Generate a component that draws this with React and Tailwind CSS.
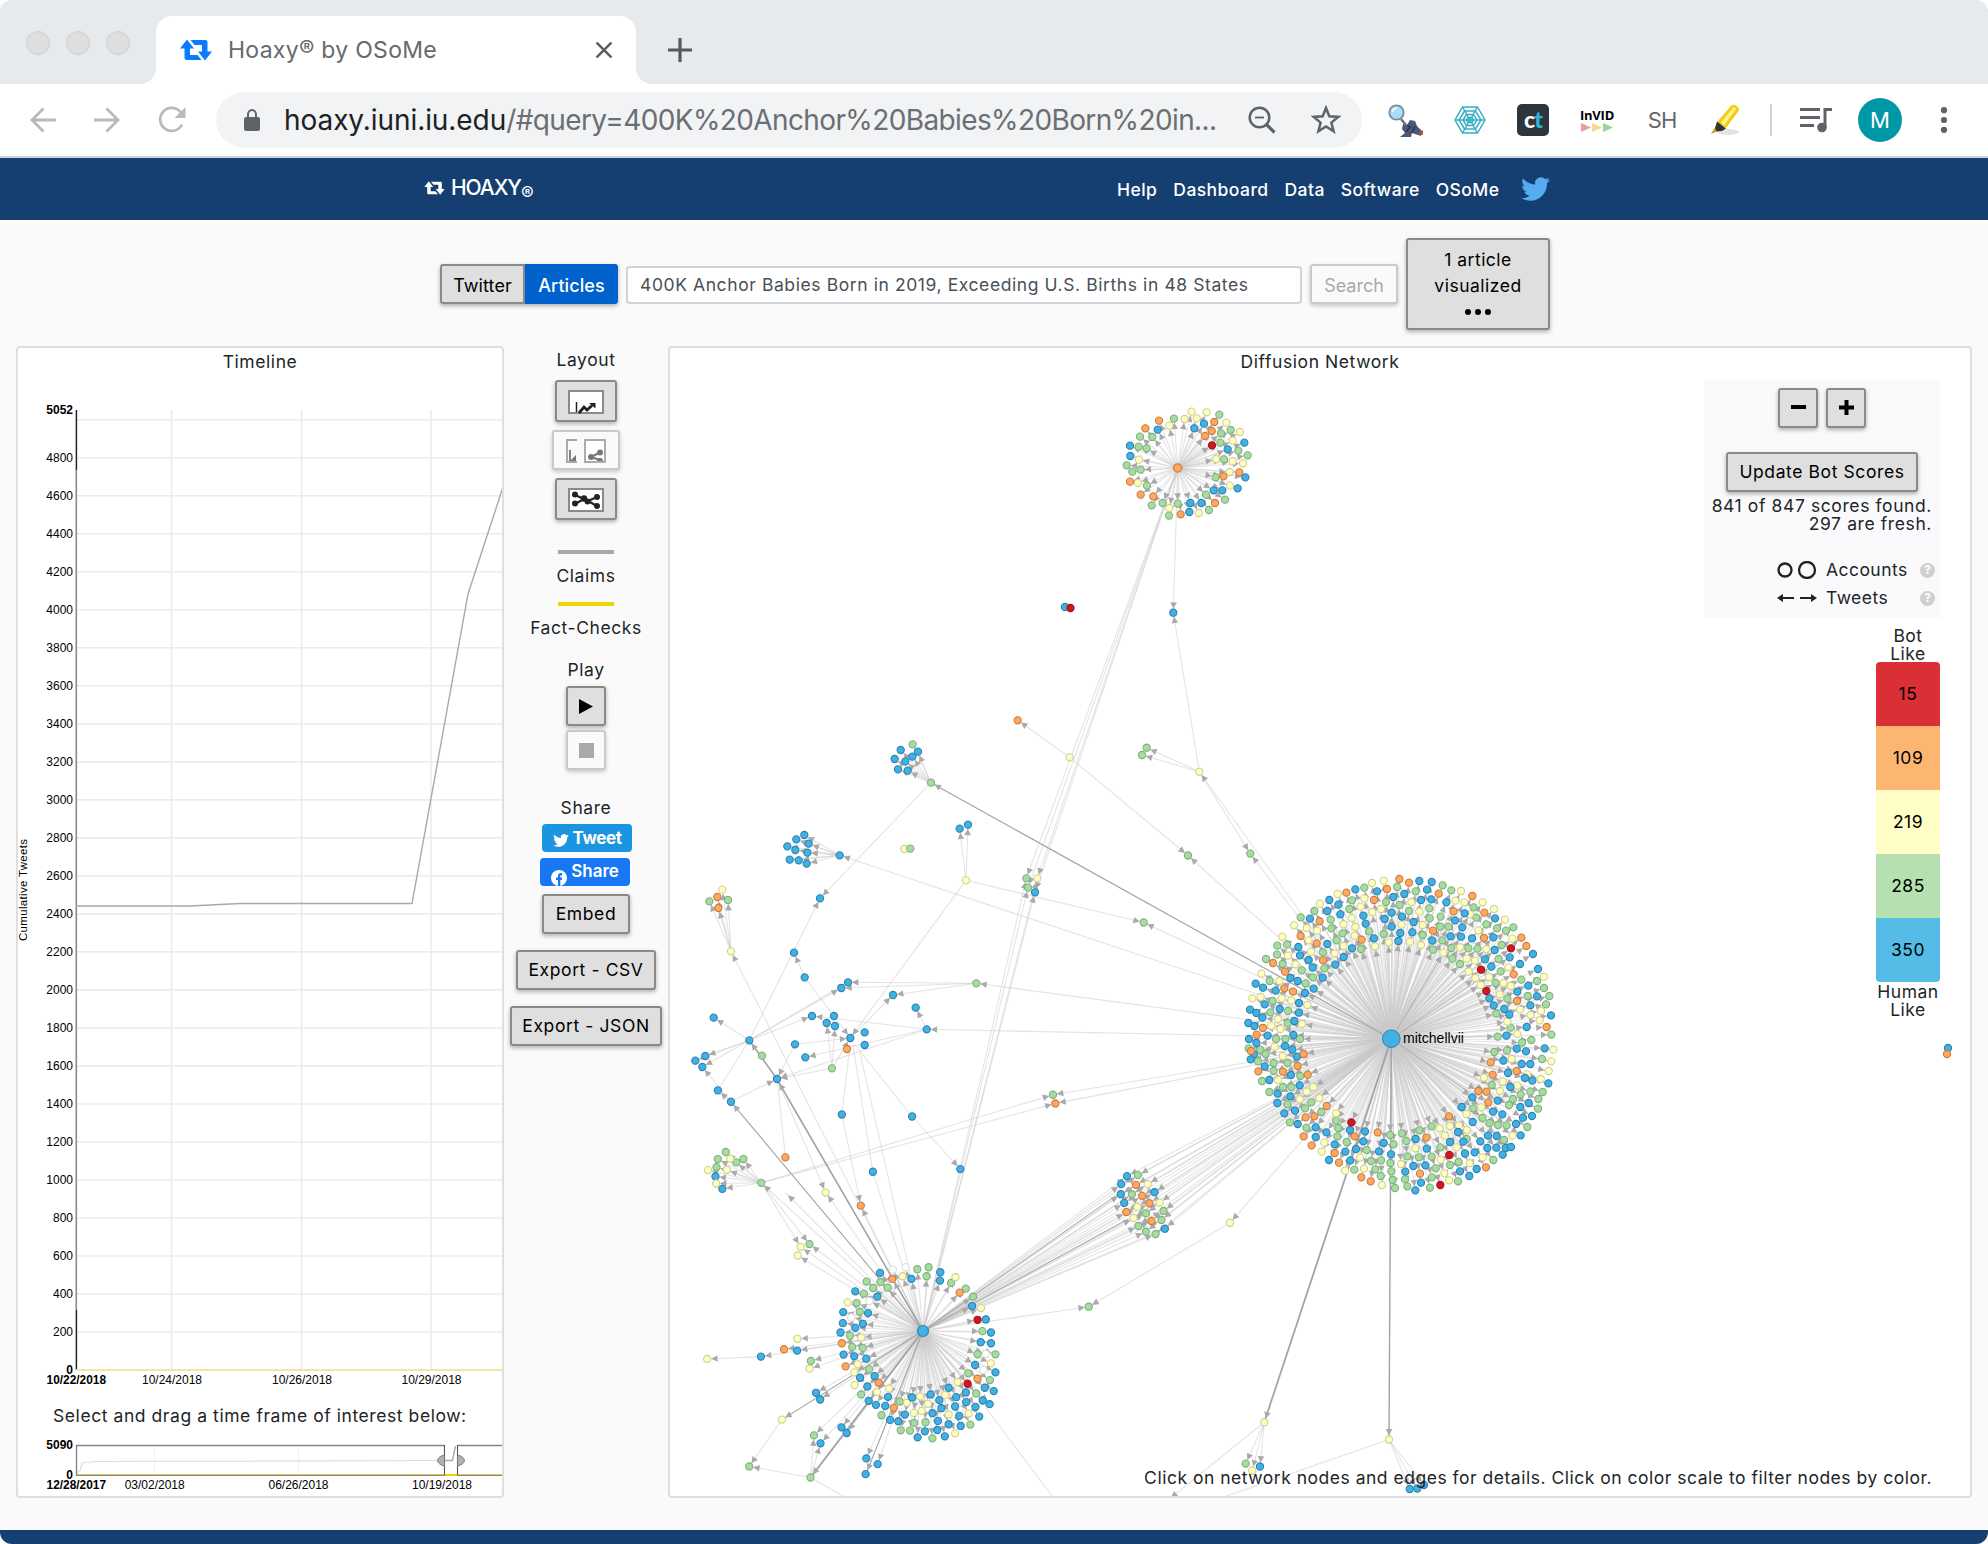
import React from "react";

/* ---------- network data: "x,y" lists per colour, local units per cluster ---------- */
const FILL = { b: "#41b1e1", g: "#a8daa2", y: "#fefec0", o: "#fda860", r: "#cd1a22", w: "#ffffff" };
const EDGE = { b: "#2d82b3", g: "#7bb37c", y: "#cfcf95", o: "#cb7b3f", r: "#a8141a", w: "#dddddd" };

const MAIN = {
  g: "403,83 501,81 557,94 468,126 509,135 537,153 638,76 664,91 366,121 358,147 253,153 212,172 302,179 304,205 338,220 320,241 418,214 461,222 393,267 578,225 598,145 599,175 632,170 631,200 655,200 637,241 609,269 667,296 690,312 664,264 715,265 742,266 739,173 731,142 769,193 801,205 828,212 850,202 815,255 806,297 812,334 797,369 874,359 921,363 942,384 958,408 948,433 893,408 832,416 799,461 842,503 876,548 803,530 793,576 904,540 964,524 936,597 831,572 142,257 171,254 141,284 108,297 158,312 215,331 119,363 227,370 249,352 283,325 279,277 128,423 121,457 174,453 173,490 138,537 166,537 210,537 56,565 91,569 107,582 84,604 131,609 173,609 131,633 211,648 96,663 159,681 184,681 118,696 172,733 225,745 244,727 274,756 180,787 229,803 318,782 325,804 322,829 350,846 410,870 423,903 453,901 436,928 452,948 373,929 480,825 516,820 491,853 529,843 532,889 567,892 605,890 568,811 605,799 631,862 481,909 484,934 525,958 488,960 495,984 532,979 617,925 606,952 600,983 660,915 686,906 684,964 785,675 849,717 872,703 901,695 938,696 925,717 924,746 837,735 730,745 757,774 779,789 804,795 830,796 892,801 822,840 710,837 790,900",
  y: "426,69 461,62 323,102 270,131 403,115 392,140 427,156 453,147 544,126 568,155 693,93 676,122 703,127 758,127 792,147 825,179 720,163 745,211 365,174 340,193 376,201 374,227 341,258 314,280 192,196 230,204 261,212 236,241 157,230 243,275 174,287 196,313 94,341 148,363 67,415 92,411 155,415 184,422 232,435 216,492 144,477 124,497 151,507 134,560 158,588 144,660 230,695 250,681 209,718 268,714 318,760 283,848 275,875 390,893 402,926 345,932 456,975 513,912 515,194 476,247 540,245 573,255 435,259 578,195 640,278 690,262 769,267 710,296 735,302 716,335 736,354 777,351 752,375 821,369 843,378 847,236 835,322 942,350 809,403 870,449 902,465 933,453 929,481 832,485 862,522 970,569 845,597 964,604 956,633 932,657 891,643 818,665 762,653 810,693 862,677 754,742 709,762 711,810 687,796 660,798 629,805 645,827 556,865 680,862 632,899 643,940 657,961 719,910 758,892 847,827",
  b: "376,88 441,94 568,63 605,66 591,89 523,102 490,111 573,120 604,118 649,127 298,120 325,134 292,153 331,163 400,167 407,191 464,177 485,158 516,170 485,200 551,186 547,217 511,219 505,243 432,235 607,242 704,160 675,181 697,202 795,175 662,229 693,230 726,235 790,232 794,270 839,292 765,298 784,320 909,282 870,312 924,327 895,377 862,395 921,409 901,436 963,466 890,501 838,464 823,447 829,527 791,436 778,415 860,566 888,574 944,565 240,176 292,252 205,261 210,286 236,300 248,323 316,314 341,291 366,265 278,353 251,386 225,399 181,354 203,363 77,371 99,383 137,392 104,433 60,449 79,459 97,473 149,447 207,429 207,458 193,483 55,489 73,498 57,537 79,549 113,527 190,525 165,558 187,569 201,590 72,583 62,598 104,619 183,645 118,660 209,676 143,701 181,709 142,729 163,760 195,752 203,792 257,802 289,817 257,831 314,853 360,810 405,814 400,844 378,867 346,875 361,901 297,900 461,849 447,874 483,883 557,837 590,866 550,918 586,916 526,935 573,968 556,991 660,846 684,816 728,786 700,845 734,877 705,880 751,844 774,827 800,828 772,864 799,863 827,864 843,861 818,884 872,826 858,792 690,934 718,948 740,927 879,773 906,768 871,741 896,729 817,763 789,755 803,722 727,712 695,741 841,681 885,654 907,662 955,670 875,612 901,612 820,602 834,639",
  o: "508,57 537,68 471,87 349,98 432,120 626,101 727,108 671,154 763,158 609,212 762,234 874,233 889,258 269,184 212,228 395,239 260,250 279,301 129,309 165,335 163,385 189,395 99,504 80,524 63,573 221,582 85,634 159,635 203,618 233,644 290,738 227,772 253,769 221,829 245,856 374,829 443,817 314,879 327,908 394,952 422,964 570,941 589,833 657,769 745,693 769,695 775,727 788,644 782,607 860,633 851,343 861,423 950,501 768,922",
  r: "843,265 753,329 769,393 364,787 658,885 631,975",
};
const TOP = {
  g: "282,116 418,104 180,170 217,171 176,200 200,205 140,256 157,275 182,269 201,317 215,376 248,369 267,407 293,371 378,344 387,390 435,359 407,292 432,238 421,188 423,160 452,150 475,212 503,226",
  y: "335,95 380,97 314,117 350,115 268,137 439,128 480,156 458,182 408,237 458,244 489,250 449,276 450,317 356,399 268,384 174,309 177,239",
  o: "237,122 196,145 403,126 395,153 375,168 478,277 430,289 150,305 182,344 220,349 302,403 405,369",
  b: "150,197 151,228 233,149 343,145 372,131 493,188 443,208 496,292 473,325 427,331 401,331 364,369 331,369 328,396",
  r: "396,196",
};
const RING = {
  g: "571,602 611,603 590,621 632,620 563,638 718,565 751,559 745,586 816,606 859,623 880,647 542,666 551,692 907,750 523,764 529,797 560,800 893,819 945,819 578,864 866,876 929,896 555,939 889,936 667,960 614,1001 709,1024 742,1022 670,1046 697,1047 762,1070 872,1029",
  y: "675,586 829,589 516,664 903,681 555,769 545,849 535,873 536,911 636,921 601,932 932,846 835,902 726,945 799,941 688,964 749,967 708,994 731,988 809,999 867,996 828,1055",
  o: "645,594 841,635 499,786 510,855 606,904 893,892 650,979",
  b: "610,576 701,594 785,574 784,599 538,631 602,647 503,693 575,696 877,675 917,715 502,726 560,728 538,740 495,754 932,754 902,783 932,786 504,820 535,825 570,832 886,851 594,884 552,889 573,915 945,873 633,946 577,958 598,970 625,973 809,919 757,939 703,948 831,947 859,933 914,919 940,929 782,956 828,975 860,962 908,957 928,968 887,976 788,980 762,995 682,999 639,1015 663,1019 840,1003 898,1005 778,1018 809,1028 844,1033 740,1049 776,1045 719,1067 798,1064",
  r: "893,716 864,907",
  w: "647,566 684,559 579,660 526,709 917,818 910,866",
};
/* shared audience between the two large hubs */
const BRIDGE = {
  b: "1327,287 1310,311 1407,335 1309,341 1319,367 1437,444",
  g: "1359,284 1341,341 1382,398 1433,391 1427,418 1360,436 1382,453 1410,460",
  y: "1387,311 1422,366 1357,379 1346,412",
  o: "1353,313 1371,346 1392,368 1325,394 1398,421",
};
const LOWER = {
  b: "139,31 177,65 499,103 703,109 589,274 843,266 132,288 152,325 264,826 369,808 424,934 436,954 498,1037 513,1054 437,1085 570,1130 603,1147 568,1177",
  g: "1112,44 162,215 139,236 213,236 192,246 135,260 265,307 405,490 1216,677 409,839 418,1061 408,1187 230,1154",
  y: "175,235 110,269 165,268 134,309 452,336 379,498 371,524 370,773 108,833 405,862 325,1014",
  o: "1119,70 335,231 554,375 331,804",
};
const UPPER = {
  o: "1043,61 142,591 145,624 531,1047",
  y: "522,172 703,447 888,541 157,569 183,754 1102,535",
  g: "728,133 783,248 721,446 1069,535 1074,563 118,604 174,600 919,850 276,1067 486,1105",
  b: "692,150 744,155 674,177 727,170 706,184 684,208 713,212 403,405 379,418 416,431 352,439 376,450 412,458 359,479 386,481 410,491 509,466 869,386 894,374 1095,577 450,595 372,758 404,832 534,847 514,864 669,885 737,923 770,988 426,948 492,948 470,969 495,978 541,1014 584,997 584,1035 131,953 238,1021 375,1033 406,1072 106,1068 76,1082 97,1101 321,1137",
};
UPPER.y = UPPER.y.replace("522,172", "1199,172");
const LOOSE = {
  g: "1146.7,747.7 1142,755 1188,855.5 1250.3,853.6 1143.7,922.5 1245.7,1463.6",
  y: "1199.3,771.8 1230,1222.8 1264.3,1422.2 1252.3,1470.5 1389,1439.5",
  b: "1173.3,612.7 1065,607 1260,1466.5 1409.7,1489 1417.3,1488.5 1424,1485 1948,1048",
  r: "1070.5,608",
  o: "1947,1054",
};

const build = (data, ox, oy, sx, sy) =>
  Object.entries(data).flatMap(([c, s]) =>
    s.split(" ").map((p) => {
      const [x, y] = p.split(",").map(Number);
      return { c, x: ox + x / sx, y: oy + y / sy };
    })
  );

const main = build(MAIN, 1230, 860, 3, 3);
const top = build(TOP, 1080, 380, 3, 3);
const ring = build(RING, 670, 1080, 2.9037, 2.986);
const bridge = build(BRIDGE, 670, 1080, 2.9037, 2.986);
const lower = build(LOWER, 670, 1080, 2.9037, 2.986);
const upper = build(UPPER, 670, 700, 3, 3);
const loose = build(LOOSE, 0, 0, 1, 1);

const M = [1391.3, 1038.7];
const A = [1177.7, 468];
const B = [923, 1331];

const spokes = (hub, nodes) => nodes.map((n) => [hub[0], hub[1], n.x, n.y, 1]);
const fan = (x, y, pts) => pts.map((p) => [x, y, p[0], p[1], 1]);

const links = [
  ...fan(931, 782.7, [[912.7, 744.3], [918, 751.7], [900.7, 750], [912.3, 756.7], [905.3, 761.3], [894.7, 759], [898, 769.3], [907.7, 770.7]]),
  ...fan(839.7, 855.3, [[804.3, 835], [796.3, 839.3], [808.7, 843.7], [787.3, 846.3], [795.3, 850], [807.3, 852.7], [789.7, 859.7], [798.7, 860.3], [806.7, 863.7]]),
  ...fan(731, 951.3, [[722.3, 889.7], [717.3, 897], [718.3, 908], [709.3, 901.3], [728, 900]]),
  ...fan(966, 880.3, [[959.7, 828.7], [968, 824.7]]),
  ...fan(761.3, 1182.8, [[725.8, 1152], [717.9, 1159], [743.4, 1159], [736.1, 1162.4], [716.5, 1167], [707.9, 1170], [726.8, 1169.8], [715.5, 1176.4], [716.1, 1183.5], [722.3, 1188.8], [809.5, 1244.1], [800.5, 1246.8], [1053, 1094.7], [1055.4, 1103.4]]),
  ...fan(749.3, 1040.3, [[820, 898.3], [713.7, 1017.7], [812, 1016], [841.3, 988], [848, 982.3], [705.3, 1056], [695.3, 1060.7], [702.3, 1067]]),
  ...fan(976.3, 983.3, [[848, 982.3], [841.3, 988], [893, 995]]),
  ...fan(926.7, 1029.3, [[915.7, 1007.7], [812, 1016], [805.3, 1057.3], [777, 1079]]),
  ...fan(832, 1068.3, [[826.7, 1023], [835, 1026], [777, 1079], [850.3, 1038]]),
  [804.7, 977.3, 850.3, 1038, 1], [966, 880.3, 850.3, 1038, 1], [850.3, 1038, 893, 995, 1],
  [795, 1044.3, 850.3, 1038, 1], [795, 1044.3, 777, 1079, 1],
  ...fan(1199.3, 771.8, [[1146.7, 747.7], [1142, 755], [1250.3, 853.6], [1173.3, 612.7]]),
  ...fan(1069.7, 757.3, [[1017.7, 720.3], [1188, 855.5]]),
  ...fan(1264.3, 1422.2, [[1245.7, 1463.6], [1252.3, 1470.5], [1260, 1466.5], [1168, 1500]]),
  ...fan(1389, 1439.5, [[1409.7, 1489], [1417.3, 1488.5], [1424, 1485]]),
  ...fan(M[0], M[1], [[839.7, 855.3], [976.3, 983.3], [926.7, 1029.3], [1188, 855.5], [1250.3, 853.6], [1199.3, 771.8], [1143.7, 922.5], [1053, 1094.7], [1055.4, 1103.4], [1230, 1222.8]]),
  ...fan(A[0], A[1], [[1173.3, 612.7], [1026.3, 878.3], [1028, 887.7], [1037.3, 878.3], [1035, 892.3]]),
  ...fan(B[0], B[1], [[1028, 887.7], [1026.3, 878.3], [1035, 892.3], [1037.3, 878.3], [731, 951.3], [761.3, 1182.8], [785.4, 1192.5], [825.7, 1192.5], [860.8, 1205.6], [809.5, 1244], [800.5, 1247], [797.8, 1255.5], [797.4, 1338.9], [797, 1350.6], [784, 1349.3], [760.9, 1356.6], [810.9, 1361], [809.5, 1368.7], [816, 1392.8], [820, 1399.5], [841.5, 1427.3], [846.7, 1433], [814, 1435.3], [820.5, 1443.4], [866.3, 1458.4], [877.7, 1464.1], [1088.8, 1306.7]]),
  [966, 880.3, 1143.7, 922.5, 1], [931, 782.7, 820, 898.3, 1], [804.7, 977.3, 794, 952.7, 1],
  [912, 1116.5, 960.3, 1169, 1], [912, 1116.5, 855, 1045, 0],
  [850, 1045, 841.8, 1114.5, 0], [841.8, 1114.5, 860.8, 1205.6, 1], [853, 1045, 872.8, 1171.8, 0],
  [872.8, 1171.8, 923, 1331, 0], [777.4, 1080, 785.4, 1157.4, 0], [777.4, 1080, 825.7, 1192.5, 1],
  [731, 1101.8, 777, 1079, 1], [731, 1101.8, 717.9, 1090.4, 1], [731, 1101.8, 702.3, 1067, 1],
  [860, 1053, 923, 1331, 0], [749.3, 1040.3, 715, 1095, 0], [760.9, 1356.6, 707.2, 1359, 1],
  [781.9, 1419.6, 749.2, 1466.5, 1], [810.5, 1477.5, 749.2, 1466.5, 1], [810.5, 1477.5, 814, 1435.3, 1],
  [810.5, 1477.5, 820.5, 1443.4, 1], [810.5, 1477.5, 850, 1500, 0], [980, 1400, 1055, 1500, 0],
  [1230, 1222.8, 1088.8, 1306.7, 1], [1389, 1439.5, 1215, 1500, 0], [923, 1331, 980, 1400, 0],
];
const strong = [
  [1391.3, 1038.7, 931, 782.7, 1.2], [1391.3, 1038.7, 1264.3, 1422.2, 1.8], [1391.3, 1038.7, 1389, 1439.5, 1.4],
  [923, 1331, 777.4, 1080, 1.6], [923, 1331, 731, 1101.8, 1.1], [923, 1331, 781.9, 1419.6, 1.1],
  [923, 1331, 810.5, 1477.5, 2], [777, 1079, 749.3, 1040.3, 1.6], [923, 1331, 866, 1474, 1.1],
  [923, 1331, 1121, 1192, 1], [923, 1331, 1128, 1219, 1],
  [1391.3, 1038.7, 1438, 962, 0.8], [1391.3, 1038.7, 1476, 982, 0.8], [1391.3, 1038.7, 1470, 1093, 0.8],
];

function arrow([x1, y1, x2, y2]) {
  const d = Math.hypot(x2 - x1, y2 - y1) || 1;
  const ux = (x2 - x1) / d;
  const uy = (y2 - y1) / d;
  const tx = x2 - ux * 4;
  const ty = y2 - uy * 4;
  const bx = tx - ux * 6.4;
  const by = ty - uy * 6.4;
  return `M${tx.toFixed(1)} ${ty.toFixed(1)}L${(bx - uy * 3.3).toFixed(1)} ${(by + ux * 3.3).toFixed(1)}L${(bx + uy * 3.3).toFixed(1)} ${(by - ux * 3.3).toFixed(1)}Z`;
}
const seg = (l) => `M${l[0].toFixed(1)} ${l[1].toFixed(1)}L${l[2].toFixed(1)} ${l[3].toFixed(1)}`;

function Network() {
  const rays = [...spokes(M, main), ...spokes(A, top), ...spokes(B, ring)];
  const shared = [...spokes(M, bridge), ...spokes(B, bridge)];
  const thin = [...rays, ...shared, ...links];
  const heads = [...rays, ...shared, ...links.filter((l) => l[4]), ...strong.slice(0, 9)];
  return (
    <svg className="block h-full w-full" viewBox="670 348 1300 1148" fill="none">
      <g stroke="#c9c9c9" strokeOpacity="0.5" strokeWidth="1.1">
        {thin.map((l, i) => <path key={i} d={seg(l)} />)}
      </g>
      <g stroke="#a3a3a3">
        {strong.map((l, i) => <path key={i} d={seg(l)} strokeWidth={l[4]} />)}
      </g>
      <path d={heads.map(arrow).join("")} fill="#aaaaaa" />
      {[...upper, ...lower, ...loose, ...bridge, ...top, ...ring, ...main].map((n, i) => (
        <circle key={i} cx={n.x} cy={n.y} r="3.6" fill={FILL[n.c]} stroke={EDGE[n.c]} strokeWidth="1.1" />
      ))}
      <circle cx={A[0]} cy={A[1]} r="4.1" fill={FILL.o} stroke={EDGE.o} strokeWidth="1.2" />
      <circle cx={B[0]} cy={B[1]} r="5.5" fill={FILL.b} stroke={EDGE.b} strokeWidth="1.2" />
      <circle cx={M[0]} cy={M[1]} r="8.8" fill={FILL.b} stroke={EDGE.b} strokeWidth="1" />
      <text x="1403" y="1043" fontSize="14" fill="#000" fontFamily="Liberation Sans, sans-serif" textLength="61" lengthAdjust="spacingAndGlyphs">mitchellvii</text>
    </svg>
  );
}

/* ---------- timeline ---------- */
const yAt = (v) => 1370 - v * 0.19005;
const ticks = Array.from({ length: 24 }, (_, i) => (i + 1) * 200);

function Timeline() {
  return (
    <svg className="block h-full w-full" viewBox="18 348 484 1148" fontFamily="Liberation Sans, sans-serif" fontSize="12" fill="#000">
      <g stroke="#ececec" strokeWidth="1.6">
        {[...ticks, 5000].map((v) => <path key={v} d={`M77 ${yAt(v)}H504`} />)}
        {[171.5, 301.5, 431].map((x) => <path key={x} d={`M${x} 410V1370`} />)}
      </g>
      <path d="M76.3 410V1370" stroke="#8a8a8a" strokeWidth="1.6" />
      <path d="M76.5 410V470M76.5 1310V1370" stroke="#222" strokeWidth="1.2" />
      <path d="M76 1370H504" stroke="#f2e6a0" strokeWidth="2" />
      <path d="M76 906H190L240 903.5H412L468 594L504 484" fill="none" stroke="#a9a9a9" strokeWidth="1.4" />
      <g textAnchor="end">
        {ticks.map((v) => <text key={v} x="73" y={yAt(v) + 4.5}>{v}</text>)}
        <g fontWeight="700">
          <text x="73" y="414">5052</text>
          <text x="73" y="1373.5">0</text>
          <text x="73" y="1449">5090</text>
          <text x="73" y="1478.5">0</text>
        </g>
      </g>
      <g textAnchor="middle">
        <text x="76.3" y="1384" fontWeight="700" textLength="59.5" lengthAdjust="spacingAndGlyphs">10/22/2018</text>
        <text x="172" y="1384">10/24/2018</text>
        <text x="302" y="1384">10/26/2018</text>
        <text x="431.5" y="1384">10/29/2018</text>
        <text x="76.3" y="1489" fontWeight="700" textLength="59.5" lengthAdjust="spacingAndGlyphs">12/28/2017</text>
        <text x="154.7" y="1489">03/02/2018</text>
        <text x="298.5" y="1489">06/26/2018</text>
        <text x="442" y="1489">10/19/2018</text>
      </g>
      <text x="26.500" y="890" fontSize="11.500" textAnchor="middle" transform="rotate(-90 26.500 890)" textLength="102">Cumulative Tweets</text>
      <path d="M154.5 1446V1475M298.5 1446V1475" stroke="#f3f3f3" />
      <path d="M76 1473L80 1471L82 1463L95 1461.5L444 1460.5" fill="none" stroke="#dedede" strokeWidth="1.2" />
      <path d="M504 1445.5H457.5M444.5 1445.5H76.5V1475" fill="none" stroke="#858585" strokeWidth="1.4" />
      <path d="M76 1475.3H504" stroke="#9b8b3c" strokeWidth="1.6" />
      <path d="M444.5 1475H457.5" stroke="#f0d400" strokeWidth="2.2" />
      <path d="M444 1460.5H452.5L455.5 1446" fill="none" stroke="#a9a9a9" strokeWidth="1.4" />
      <path d="M444.5 1445V1475M457.5 1445V1475" stroke="#555" strokeWidth="1.1" />
      <g fill="#b0b0b0" stroke="#777" strokeWidth="1">
        <path d="M444.5 1455C440 1456 438 1458 437.5 1460.5C438 1463 440 1465 444.5 1466Z" />
        <path d="M457.5 1455C462 1456 464 1458 464.5 1460.5C464 1463 462 1465 457.5 1466Z" />
      </g>
    </svg>
  );
}

/* ---------- icons ---------- */
const Retweet = ({ className }) => (
  <svg className={className} viewBox="0 0 32 22" fill="currentColor">
    <path d="M7 0.500L14 9.500H10V16H17.500L21.500 21H6.500Q4.500 21 4.500 19V9.500H0Z" />
    <path d="M25 21.500L18 12.500H22V6H14.500L10.500 1H25.500Q27.500 1 27.500 3V12.500H32Z" />
  </svg>
);
const Bird = ({ className }) => (
  <svg className={className} viewBox="0 0 24 20" fill="currentColor">
    <path d="M23.950 2.570a10 10 0 01-2.820.770 4.960 4.960 0 002.160-2.720c-.950.550-2 .950-3.130 1.180a4.920 4.920 0 00-8.380 4.480C7.690 6.100 4.070 4.130 1.640 1.160a4.820 4.820 0 00-.660 2.480c0 1.710.870 3.210 2.190 4.100a4.900 4.900 0 01-2.230-.620v.060a4.920 4.920 0 003.950 4.830 5 5 0 01-2.210.080 4.940 4.940 0 004.600 3.420A9.870 9.870 0 010 17.540a13.990 13.990 0 007.550 2.210c9.050 0 14-7.500 14-13.990 0-.210 0-.420-.020-.630a9.940 9.940 0 002.460-2.550z" />
  </svg>
);

const BTN = "flex items-center justify-center rounded-[3px] border-2 border-[#8a8a8a] bg-[#dfdfdf] text-black shadow-[0_2px_4px_rgba(0,0,0,0.3)]";
const OFF = "flex items-center justify-center rounded-[3px] border-2 border-[#c9c9c9] bg-[#fafafa] text-[#a9a9a9] shadow-[0_2px_4px_rgba(0,0,0,0.2)]";

function Extensions() {
  return (
    <>
      <svg className="h-[36px] w-[36px]" viewBox="0 0 36 36">
        <path d="M13 35L18 31L15 27L16 22L20 23L23 18L28 19L30 24L35 29L34 34L25 31L24 35Z" fill="#4d5878" />
        <path d="M19 30L23 25M25 31L28 24M20 23L24 26" stroke="#2b3350" strokeWidth="1.500" />
        <path d="M31 32L36 28V33Z" fill="#b6552d" />
        <path d="M14 17L19 23" stroke="#6a6f7c" strokeWidth="2.500" />
        <circle cx="9.500" cy="10.500" r="7.200" fill="#a9dcf5" stroke="#7c8aa0" strokeWidth="1.800" />
        <path d="M5.500 10Q6 6.500 10 6" stroke="#eefaff" strokeWidth="2" fill="none" />
      </svg>
      <svg className="h-[30px] w-[32px]" viewBox="0 0 32 30" fill="none" stroke="#35b0c4" strokeWidth="1.500">
        <path d="M8.500 2H23.500L31 15L23.500 28H8.500L1 15Z" />
        <path d="M10.500 6H21.500L27 15L21.500 24H10.500L5 15Z" />
        <path d="M12.500 9.500H19.500L23 15L19.500 20.500H12.500L9 15Z" />
        <path d="M8.500 2L23.500 28M23.500 2L8.500 28M1 15H31" />
        <path d="M14 12.500H18L19.500 15L18 17.500H14L12.500 15Z" />
      </svg>
      <div className="flex h-[32px] w-[32px] items-center justify-center rounded-[5px] bg-[#2c363c] pb-[2px] font-['Lato',sans-serif] text-[23px] font-black leading-none tracking-[-1px] text-white">
        c<span className="text-[#2cb5d8]">t</span>
      </div>
      <div className="flex w-[34px] flex-col items-center">
        <span className="font-['Open_Sans',sans-serif] text-[13px] font-bold leading-[12px] tracking-[-0.200px] text-black">InVID</span>
        <svg className="mt-[2px] h-[9px] w-[32px]" viewBox="0 0 32 9">
          <path d="M0 0L10 4.500L0 9Z" fill="#f29b95" />
          <path d="M11 0L21 4.500L11 9Z" fill="#f0dc94" />
          <path d="M22 0L32 4.500L22 9Z" fill="#94d89c" />
        </svg>
      </div>
      <span className="w-[34px] text-center text-[22px] leading-none tracking-[-1px] text-[#666]">SH</span>
      <svg className="h-[34px] w-[32px]" viewBox="0 0 32 34">
        <ellipse cx="18" cy="29" rx="11" ry="3" fill="#e3e3e3" />
        <path d="M7 19L21 3Q23 1 25 2L28.500 4.500Q29.500 6 28.500 8L16 25Z" fill="#f6c915" />
        <path d="M11 19.500L23.500 4L26.500 5.500L14 22.500Z" fill="#fdf08a" />
        <path d="M7 18.500L16 25.500L12 28L6 28.500L5 25Z" fill="#333" />
        <path d="M4.500 25L6.500 28.500L1 31Z" fill="#c99a10" />
      </svg>
    </>
  );
}

const LABEL = "text-center text-[17.500px] leading-[24px] tracking-[0.580px] text-[#212529]";

export default function App() {
  return (
    <div className="flex h-[1544px] w-[1988px] flex-col overflow-hidden rounded-[12px] bg-[#fafafa] font-['Inter',sans-serif]">
      {/* tab strip */}
      <div className="flex h-[84px] shrink-0 items-end bg-[#e6eaec]">
        <div className="flex h-full w-[140px] items-center gap-[16px] pl-[26px] pb-0.5 pt-1">
          {[0, 1, 2].map((i) => <div key={i} className="h-[24px] w-[24px] shrink-0 rounded-full border border-[#cfcfcf] bg-[#dedede]" />)}
        </div>
        <svg className="h-4 w-4" viewBox="0 0 16 16"><path d="M16 0V16H0A16 16 0 0 0 16 0Z" fill="#fff" /></svg>
        <div className="flex h-[68px] w-[480px] items-center rounded-t-[16px] bg-white pl-[24px]">
          <Retweet className="h-[22px] w-[32px] text-[#0a7cff]" />
          <span className="ml-[16px] w-[340px] whitespace-nowrap text-[23px] tracking-[0.280px] text-[#66696d]">Hoaxy<span className="relative -top-[1px]">®</span> by OSoMe</span>
          <svg className="ml-[28px] h-[16px] w-[16px]" viewBox="0 0 16 16" stroke="#5c6064" strokeWidth="2.500"><path d="M0.500 0.500L15.500 15.500M15.500 0.500L0.500 15.500" /></svg>
        </div>
        <svg className="h-4 w-4" viewBox="0 0 16 16"><path d="M0 0V16H16A16 16 0 0 1 0 0Z" fill="#fff" /></svg>
        <svg className="mb-[22px] ml-[16px] h-[24px] w-[24px]" viewBox="0 0 24 24" stroke="#55585b" strokeWidth="3.200"><path d="M12 0V24M0 12H24" /></svg>
      </div>

      {/* address bar */}
      <div className="flex h-[74px] shrink-0 items-center border-b-2 border-[#cdd3d8] bg-white">
        <div className="flex w-[216px] items-center gap-[38px] pl-[30px]">
          <svg className="h-[26px] w-[26px]" viewBox="0 0 26 26" fill="none" stroke="#b9babc" strokeWidth="2.800"><path d="M26 13H2M13.500 1.500L2 13L13.500 24.500" /></svg>
          <svg className="h-[26px] w-[26px]" viewBox="0 0 26 26" fill="none" stroke="#b9babc" strokeWidth="2.800"><path d="M0 13H24M12.500 1.500L24 13L12.500 24.500" /></svg>
          <svg className="h-[28px] w-[28px]" viewBox="0 0 28 28" fill="none" stroke="#b9babc" strokeWidth="2.800"><path d="M24 18.500A11.500 11.500 0 1 1 22.500 6" /><path d="M27.500 1V12H16.500Z" fill="#b9babc" stroke="none" /></svg>
        </div>
        <div className="flex h-[56px] w-[1146px] items-center rounded-full bg-[#f1f3f4] pl-[28px]">
          <svg className="h-[22px] w-[16px]" viewBox="0 0 16 22"><rect y="8" width="16" height="14" rx="2" fill="#5f6368" /><path d="M4 9V5.500A4 4.500 0 0 1 12 5.500V9" fill="none" stroke="#5f6368" strokeWidth="2" /></svg>
          <span className="ml-[24px] w-[964px] whitespace-nowrap text-[28px] leading-none tracking-[-0.070px] text-[#202124]">hoaxy.iuni.iu.edu<span className="tracking-[-0.620px] text-[#6b6e72]">/#query=400K%20Anchor%20Babies%20Born%20in...</span></span>
          <svg className="h-[28px] w-[28px]" viewBox="0 0 28 28" fill="none" stroke="#5f6368" strokeWidth="2.500"><circle cx="11.500" cy="11.500" r="9.800" /><path d="M18.500 18.500L26.500 26.500" strokeWidth="3.200" /><path d="M7 11.500H16" strokeWidth="1.800" /></svg>
          <svg className="ml-[35px] h-[30px] w-[30px]" viewBox="0 0 30 30" fill="none" stroke="#5f6368" strokeWidth="2.500"><path d="M15 3L18.300 11.300L27.200 11.900L20.400 17.600L22.600 26.300L15 21.500L7.400 26.300L9.600 17.600L2.800 11.900L11.700 11.300Z" /></svg>
        </div>
        <div className="flex w-[409px] items-center gap-[31px] pl-[25px]"><Extensions /></div>
        <div className="h-[32px] w-[2px] -ml-px bg-[#d0d2d4]" />
        <svg className="ml-[28px] h-[26px] w-[32px]" viewBox="0 0 32 26" fill="none" stroke="#5f6368" strokeWidth="3"><path d="M0 2.500H20M0 10.500H20M0 18.500H14M25 20V2.500H32" /><circle cx="22" cy="20.500" r="4.800" fill="#5f6368" stroke="none" /></svg>
        <div className="ml-[26px] flex h-[44px] w-[44px] items-center justify-center rounded-full bg-[#0097a7] text-[22px] text-white">M</div>
        <svg className="ml-[38px] h-[26px] w-[8px]" viewBox="0 0 8 26" fill="#5f6368"><circle cx="4" cy="3.200" r="3.100" /><circle cx="4" cy="13" r="3.100" /><circle cx="4" cy="22.800" r="3.100" /></svg>
      </div>

      {/* site header */}
      <header className="flex h-[62px] shrink-0 items-center bg-[#153f71] pl-[424px] text-white">
        <div className="flex w-[693px] items-center pb-[3px]">
          <Retweet className="h-[14px] w-[21px]" />
          <span className="ml-[6px] text-[21px] font-medium leading-none tracking-[-1.050px]">HOAXY</span>
          <span className="mt-[11px] w-[16px] text-[19px] leading-none">®</span>
        </div>
        <nav className="flex items-center gap-[16px] whitespace-nowrap pt-[2px] text-[17.500px] font-medium tracking-[0.440px]">
          <span>Help</span><span>Dashboard</span><span>Data</span><span>Software</span><span>OSoMe</span>
        </nav>
        <Bird className="ml-[22px] h-[24px] w-[29px] text-[#55acee]" />
      </header>

      {/* search row */}
      <div className="flex h-[126px] shrink-0 items-center pl-[440px] pt-[2px]">
        <div className="flex h-[40px] w-[178px] rounded-[3px] text-[18px] tracking-[0.300px] shadow-[0_2px_4px_rgba(0,0,0,0.300)]">
          <div className="flex w-[85px] items-center justify-center rounded-l-[3px] border-2 border-[#8a8a8a] bg-[#dfdfdf] pt-[2px] tracking-[0.100px] text-black">Twitter</div>
          <div className="flex w-[93px] items-center justify-center rounded-r-[3px] bg-[#0062cc] pt-[2px] font-medium tracking-[0.100px] text-white">Articles</div>
        </div>
        <div className="ml-[8px] mt-px flex h-[38px] w-[676px] items-center whitespace-nowrap rounded-[4px] border-2 border-[#ced4da] bg-white pl-[12px] pt-px text-[17.500px] tracking-[0.590px] text-[#495057]">400K Anchor Babies Born in 2019, Exceeding U.S. Births in 48 States</div>
        <div className={`${OFF} ml-[8px] h-[40px] w-[88px] pt-[2px] text-[18px]`}>Search</div>
        <div className={`${BTN} ml-[8px] h-[92px] w-[144px] flex-col pt-[4px] text-[17.500px] leading-[26px] tracking-[0.500px]`}>
          <span>1 article</span>
          <span>visualized</span>
          <svg className="my-[10px] h-[6px] w-[26px]" viewBox="0 0 26 6"><circle cx="3" cy="3" r="3" /><circle cx="13" cy="3" r="3" /><circle cx="23" cy="3" r="3" /></svg>
        </div>
      </div>

      {/* main area */}
      <main className="flex h-[1152px] shrink-0 pl-[16px]">
        <section className="relative h-full w-[488px] overflow-hidden rounded-[4px] border-2 border-[#dfdfdf] bg-white">
          <Timeline />
          <div className={`${LABEL} absolute inset-x-0 top-[2px]`}>Timeline</div>
          <div className="absolute left-[35px] top-[1056px] whitespace-nowrap text-[17.500px] leading-[24px] tracking-[0.570px] text-[#212529]">Select and drag a time frame of interest below:</div>
        </section>

        <aside className="flex w-[164px] flex-col items-center">
          <div className={`${LABEL} mt-[2px]`}>Layout</div>
          <div className={`${BTN} mt-[8px] h-[42px] w-[62px]`}>
            <svg className="mt-[2px] h-[24px] w-[36px]" viewBox="0 0 36 24"><rect x="1" y="1" width="34" height="22" fill="#fff" stroke="#8a8a8a" strokeWidth="2" /><path d="M8.500 12V22" stroke="#222" strokeWidth="1.500" /><path d="M11 23L16 17L19 20L24 15.500" fill="none" stroke="#222" strokeWidth="2.800" /><path d="M21 13H27.500V18.500Z" fill="#222" /></svg>
          </div>
          <div className={`${OFF} mt-[8px] h-[40px] w-[68px] pt-[2px]`}>
            <svg className="h-[24px] w-[40px]" viewBox="0 0 40 24" fill="none" stroke="#a4a4a4" strokeWidth="1.800"><path d="M11 1H1V23H11" /><path d="M4 11V22" stroke="#777" /><path d="M4 22L10 16V22Z" fill="#777" stroke="none" /><rect x="19" y="1" width="20" height="22" fill="#fff" /><path d="M25 18L34 13.500M25 18L34 21" stroke="#777" strokeWidth="2" /><circle cx="25" cy="18" r="3" fill="#777" stroke="none" /><circle cx="34" cy="13.500" r="3" fill="#777" stroke="none" /><path d="M31 22A3 3 0 0 1 37 22Z" fill="#777" stroke="none" /></svg>
          </div>
          <div className={`${BTN} mt-[8px] h-[42px] w-[62px]`}>
            <svg className="mt-px h-[24px] w-[36px]" viewBox="0 0 36 24"><rect x="1" y="1" width="34" height="22" fill="#fff" stroke="#8a8a8a" strokeWidth="2" /><path d="M7 7L16 11L20 13L29 9M7 16L16 11M20 13L29 18" fill="none" stroke="#222" strokeWidth="2.200" /><g fill="#222"><circle cx="7" cy="6.500" r="3" /><circle cx="7" cy="15.500" r="3" /><circle cx="16" cy="10.500" r="3.200" /><circle cx="19.500" cy="13.500" r="3" /><circle cx="29" cy="9" r="3" /><circle cx="29" cy="18" r="3" /></g></svg>
          </div>
          <div className="mt-[30px] h-[4px] w-[56px] bg-[#a9a9a9]" />
          <div className={`${LABEL} mt-[10px]`}>Claims</div>
          <div className="mt-[14px] h-[4px] w-[56px] bg-[#f0d400]" />
          <div className={`${LABEL} mt-[10px] whitespace-nowrap`}>Fact-Checks</div>
          <div className={`${LABEL} mt-[18px]`}>Play</div>
          <div className={`${BTN} mt-[4px] h-[40px] w-[40px]`}><svg className="h-[15px] w-[14px]" viewBox="0 0 14 15"><path d="M0 0L14 7.500L0 15Z" /></svg></div>
          <div className={`${OFF} mt-[4px] h-[40px] w-[40px]`}><div className="h-[15px] w-[15px] bg-[#a9a9a9]" /></div>
          <div className={`${LABEL} mt-[26px]`}>Share</div>
          <div className="ml-[2px] mt-[4px] flex h-[28px] w-[90px] items-center justify-center gap-[4px] rounded-[4px] bg-[#1b95e0] pt-[2px] text-[17px] font-bold tracking-[-0.400px] text-white"><Bird className="mt-[2px] h-[13px] w-[16px]" />Tweet</div>
          <div className="mr-[2px] mt-[6px] flex h-[28px] w-[90px] items-center justify-center gap-[4px] rounded-[4px] bg-[#1877f2] text-[17px] font-semibold tracking-[0px] text-white">
            <svg className="mt-[11px] h-[16px] w-[16px]" viewBox="0 0 16 16"><circle cx="8" cy="8" r="8" fill="#fff" /><path d="M7 16V10H5V7.500H7V6C7 3.800 8.200 3 10 3H11.200V5.200H10.300C9.600 5.200 9.300 5.500 9.300 6.200V7.500H11.200L10.800 10H9.300V16Z" fill="#1877f2" /></svg>Share
          </div>
          <div className={`${BTN} mt-[8px] h-[40px] w-[88px] text-[17.500px] tracking-[0.600px]`}>Embed</div>
          <div className={`${BTN} mt-[16px] h-[40px] w-[140px] whitespace-nowrap text-[17.500px] tracking-[0.600px]`}>Export - CSV</div>
          <div className={`${BTN} mt-[16px] h-[40px] w-[152px] whitespace-nowrap text-[17.500px] tracking-[0.600px]`}>Export - JSON</div>
        </aside>

        <section className="relative h-full w-[1304px] overflow-hidden rounded-[4px] border-2 border-[#dfdfdf] bg-white">
          <Network />
          <div className={`${LABEL} absolute inset-x-0 top-[2px]`}>Diffusion Network</div>

          <div className="absolute right-[30px] top-[32px] flex h-[238px] w-[236px] flex-col items-center bg-[#fafafc] pt-[8px] text-[17.500px] tracking-[0.600px] text-[#212529]">
            <div className="flex gap-[8px]">
              <div className={`${BTN} h-[40px] w-[40px]`}><div className="mb-[2px] h-[4px] w-[15px] bg-black" /></div>
              <div className={`${BTN} h-[40px] w-[40px]`}><svg className="mb-[2px] h-[15px] w-[15px]" viewBox="0 0 15 15" stroke="#000" strokeWidth="4"><path d="M7.500 0V15M0 7.500H15" /></svg></div>
            </div>
            <div className={`${BTN} mt-[24px] h-[40px] w-[192px] whitespace-nowrap`}>Update Bot Scores</div>
            <div className="mt-[5px] w-full pr-[8px] text-right leading-[18px]">841 of 847 scores found.<br />297 are fresh.</div>
            <div className="mt-[23px] grid w-full grid-cols-[40px_1fr_auto] items-center gap-x-[9px] pl-[73px] pr-[5px] leading-[28px] tracking-[0.450px]">
              <svg className="h-[18px] w-[40px]" viewBox="0 0 40 18" fill="none" stroke="#222" strokeWidth="2.300"><circle cx="8" cy="9" r="6.500" /><circle cx="30" cy="9" r="8" /></svg>
              <span>Accounts</span>
              <Help />
              <svg className="h-[10px] w-[40px]" viewBox="0 0 40 10" fill="#222"><path d="M0 5L6 1V4H17V6H6V9Z" /><path d="M40 5L34 1V4H23V6H34V9Z" /></svg>
              <span>Tweets</span>
              <Help />
            </div>
          </div>

          <div className="absolute right-[30px] top-[279px] flex w-[64px] flex-col text-center text-[17.500px] leading-[18px] tracking-[0.500px] text-[#212529]">
            <div>Bot<br />Like</div>
            <div className="-mt-px overflow-hidden rounded-[4px] leading-[64px] text-black">
              <div className="h-[64px] bg-[#db2f36]">15</div>
              <div className="h-[64px] bg-[#fdb671]">109</div>
              <div className="h-[64px] bg-[#fefec6]">219</div>
              <div className="h-[64px] bg-[#b4e1af]">285</div>
              <div className="h-[64px] bg-[#55bce8]">350</div>
            </div>
            <div className="pt-[1px]">Human<br />Like</div>
          </div>

          <div className="absolute bottom-[6px] right-[38px] whitespace-nowrap text-[17.500px] leading-[24px] tracking-[0.510px] text-[#212529]">Click on network nodes and edges for details. Click on color scale to filter nodes by color.</div>
        </section>
      </main>

      <footer className="mt-[32px] h-[14px] shrink-0 bg-[#153f71]" />
    </div>
  );
}

function Help() {
  return (
    <div className="flex h-[15px] w-[15px] items-center justify-center rounded-full bg-[#cfcfcf] text-[12px] font-bold leading-none tracking-normal text-white">?</div>
  );
}
